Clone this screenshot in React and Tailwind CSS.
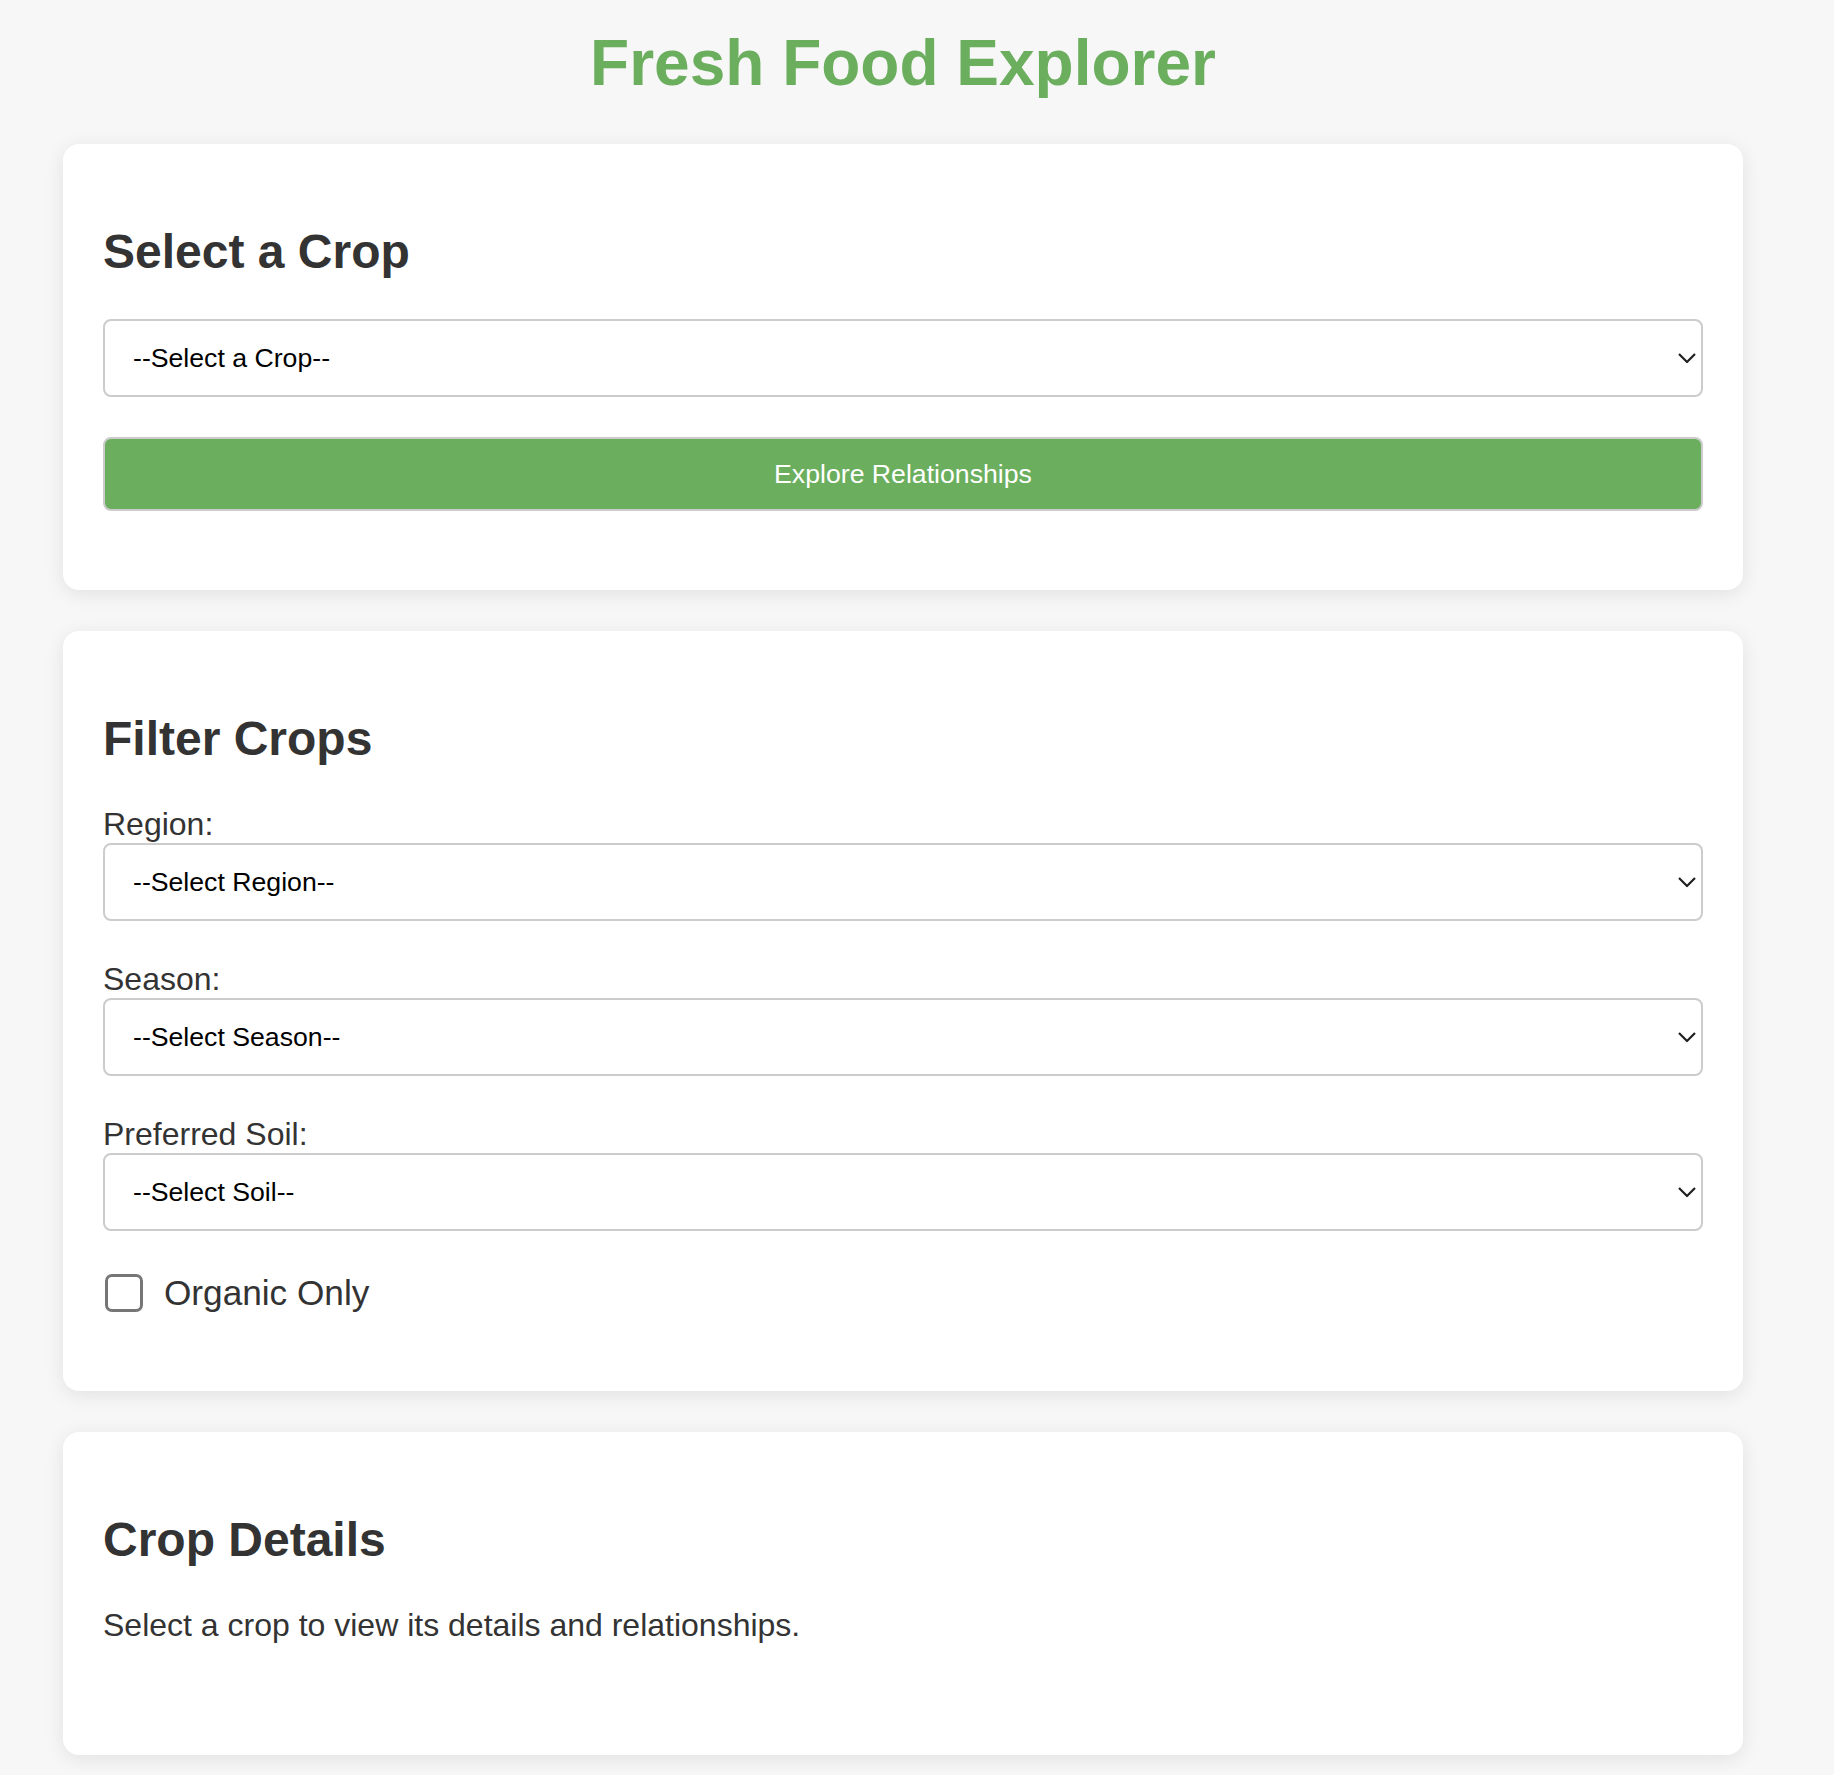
import { useState } from "react";

const Chevron = () => (
	<svg
		className="pointer-events-none absolute right-[7px] top-1/2 -translate-y-1/2"
		width="18"
		height="11"
		viewBox="0 0 18 11"
		fill="none">
		<path d="M1 1.5 L9 9.5 L17 1.5" stroke="#1f1f1f" strokeWidth="2.2" />
	</svg>
);

const Dropdown = ({ value, onChange, placeholder, options = [] }) => (
	<div className="relative">
		<select
			value={value}
			onChange={(e) => onChange(e.target.value)}
			className="block w-full h-[78px] appearance-none bg-white border-2 border-[#cccccc] rounded-[8px] pl-[28px] pr-[40px] text-[26.67px] text-black outline-none">
			<option value="">{placeholder}</option>
			{options.map((o) => (
				<option key={o} value={o}>
					{o}
				</option>
			))}
		</select>
		<Chevron />
	</div>
);

const Card = ({ title, children, className = "" }) => (
	<section
		className={`bg-white rounded-[16px] shadow-[0_4px_20px_rgba(0,0,0,0.09)] px-[40px] pt-[40px] ${className}`}>
		<h2 className="mt-[40px] mb-[40px] text-[48px] leading-[55px] font-bold text-[#333333]">
			{title}
		</h2>
		{children}
	</section>
);

export default function App() {
	const [crop, setCrop] = useState("");
	const [region, setRegion] = useState("");
	const [season, setSeason] = useState("");
	const [soil, setSoil] = useState("");
	const [organic, setOrganic] = useState(false);

	return (
		<div className="min-h-screen bg-[#f7f7f7] font-['Liberation_Sans',Arial,sans-serif]">
			<div className="w-[1806px] pt-[26px]">
				<h1 className="text-center text-[64px] leading-[74px] font-bold text-[#6aae5e] mb-[44px]">
					Fresh Food Explorer
				</h1>

				<div className="mx-auto w-[1680px] flex flex-col gap-[41px]">
					<Card title="Select a Crop" className="pb-[40px]">
						<Dropdown
							value={crop}
							onChange={setCrop}
							placeholder="--Select a Crop--"
							options={["Apple", "Carrot", "Lettuce", "Tomato"]}
						/>
						<button className="mt-[40px] mb-[39px] w-full h-[74px] bg-[#6aae5e] border-2 border-[#cccccc] rounded-[8px] text-white text-[26.67px]">
							Explore Relationships
						</button>
					</Card>

					<Card title="Filter Crops" className="pb-[40px]">
						<div className="flex flex-col gap-[40px]">
							{[
								{ label: "Region:", ph: "--Select Region--", v: region, set: setRegion },
								{ label: "Season:", ph: "--Select Season--", v: season, set: setSeason },
								{ label: "Preferred Soil:", ph: "--Select Soil--", v: soil, set: setSoil },
							].map((f) => (
								<div key={f.label}>
									<label className="block text-[32px] leading-[37px] text-[#333333]">
										{f.label}
									</label>
									<Dropdown value={f.v} onChange={f.set} placeholder={f.ph} />
								</div>
							))}
						</div>
						<label className="mt-[41px] mb-[37px] flex items-center h-[42px] gap-[21px] text-[35.2px] text-[#333333]">
							<input
								type="checkbox"
								checked={organic}
								onChange={(e) => setOrganic(e.target.checked)}
								className="ml-[2px] w-[38px] h-[38px] appearance-none bg-white border-[3px] border-[#767676] rounded-[7px] checked:bg-[#6aae5e]"
							/>
							Organic Only
						</label>
					</Card>

					<Card title="Crop Details" className="pb-[40px] mb-[21px]">
						<p className="text-[32px] leading-[37px] text-[#333333] mb-[71px]">
							Select a crop to view its details and relationships.
						</p>
					</Card>
				</div>
			</div>
		</div>
	);
}
